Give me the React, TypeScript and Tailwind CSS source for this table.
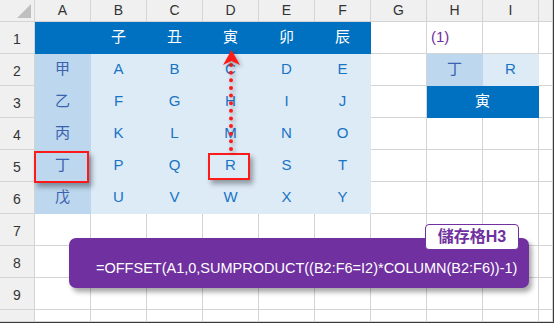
import React from 'react';

const cols = ['A', 'B', 'C', 'D', 'E', 'F', 'G', 'H', 'I', ''];
const stems = ['甲', '乙', '丙', '丁', '戊'];
const branches = ['子', '丑', '寅', '卯', '辰'];
const letters = 'ABCDEFGHIJKLMNOPQRSTUVWXY'.split('');

const font = { fontFamily: '"Liberation Sans", "Noto Sans CJK TC", sans-serif' };

type Cell = { text?: string; kind: 'plain' | 'head' | 'stem' | 'body' | 'label'; span?: boolean };

const cellClass = (kind: Cell['kind']) => {
  if (kind === 'head') return 'bg-[#0070c0] border-[#0070c0] text-white';
  if (kind === 'stem') return 'bg-[#bdd7ee] border-[#bdd7ee] text-[#3a62b0]';
  if (kind === 'body') return 'bg-[#ddebf7] border-[#ddebf7] text-[#1874c4]';
  if (kind === 'label') return 'bg-white border-[#d4d4d4] text-[#7030a0] justify-start pl-1';
  return 'bg-white border-[#d4d4d4]';
};

const rowCells = (r: number): Cell[] => {
  if (r === 1) {
    return [
      { kind: 'head' },
      ...branches.map((b) => ({ text: b, kind: 'head' as const })),
      { kind: 'plain' },
      { text: '(1)', kind: 'label' },
      { kind: 'plain' },
      { kind: 'plain' },
    ];
  }
  if (r >= 2 && r <= 6) {
    const i = r - 2;
    const extra: Cell[] =
      r === 2
        ? [{ text: '丁', kind: 'stem' }, { text: 'R', kind: 'body' }]
        : r === 3
          ? [{ text: '寅', kind: 'head', span: true }]
          : [{ kind: 'plain' }, { kind: 'plain' }];
    return [
      { text: stems[i], kind: 'stem' },
      ...letters.slice(i * 5, i * 5 + 5).map((l) => ({ text: l, kind: 'body' as const })),
      { kind: 'plain' },
      ...extra,
      { kind: 'plain' },
    ];
  }
  return Array.from({ length: 10 }, () => ({ kind: 'plain' as const }));
};

export default function App() {
  return (
    <div className="relative w-[554px] h-[323px] overflow-hidden bg-white border-r border-b border-[#3a3a3a]" style={font}>
      <div className="grid grid-cols-[35px_repeat(9,56px)_1fr] grid-rows-[22px_repeat(9,32px)_1fr] h-full">
        {/* corner */}
        <div className="relative bg-[#f0f0f0] border-r border-b border-[#d4d4d4]">
          <div className="absolute right-[3px] bottom-[3px] w-0 h-0 border-l-[14px] border-l-transparent border-b-[14px] border-b-[#bfbfbf]" />
        </div>
        {cols.map((c, i) => (
          <div key={i} className="flex items-center justify-center bg-[#f0f0f0] border-r border-b border-[#d4d4d4] text-[14px] text-[#333]">
            {c}
          </div>
        ))}
        {Array.from({ length: 10 }, (_, k) => k + 1).map((r) => (
          <React.Fragment key={r}>
            <div className="flex items-center justify-center pt-1 bg-[#f0f0f0] border-r border-b border-[#d4d4d4] text-[14px] text-[#333]">
              {r < 10 ? r : ''}
            </div>
            {rowCells(r).map((cell, j) => (
              <div
                key={j}
                className={`flex items-center justify-center border-r border-b text-[15px] ${cellClass(cell.kind)} ${cell.span ? 'col-span-2' : ''}`}
              >
                {cell.text}
              </div>
            ))}
          </React.Fragment>
        ))}
      </div>

      {/* red highlight boxes */}
      <div className="absolute left-[34px] top-[151px] w-[55px] h-[32px] border-2 border-[#ff1a1a] shadow-[3px_4px_5px_rgba(0,0,0,0.35)]" />
      <div className="absolute left-[208px] top-[153px] w-[42px] h-[27px] border-2 border-[#ff1a1a] shadow-[3px_4px_5px_rgba(0,0,0,0.35)]" />

      {/* dotted arrow */}
      <div className="absolute left-[229px] top-[63px] h-[88px] w-[4px] border-l-[4px] border-dotted border-[#ff1a1a] drop-shadow-[2px_2px_2px_rgba(0,0,0,0.35)]" />
      <svg className="absolute left-[223px] top-[50px] drop-shadow-[2px_2px_2px_rgba(0,0,0,0.3)]" width="17" height="15" viewBox="0 0 17 15">
        <path d="M8.5 0 L17 15 L8.5 11 L0 15 Z" fill="#ff1a1a" />
      </svg>

      {/* formula callout */}
      <div className="absolute left-[69px] top-[238px] w-[460px] h-[50px] rounded-[7px] bg-[#7030a0] shadow-[3px_4px_5px_rgba(0,0,0,0.35)] flex items-center pl-[27px] pt-[12px] text-white text-[14.5px] whitespace-nowrap">
        =OFFSET(A1,0,SUMPRODUCT((B2:F6=I2)*COLUMN(B2:F6))-1)
      </div>
      <div className="absolute left-[425px] top-[224px] w-[94px] h-[26px] rounded-[4px] bg-white border border-[#7030a0] flex items-center justify-center text-[#7030a0] text-[16px] font-semibold">
        儲存格H3
      </div>
    </div>
  );
}
